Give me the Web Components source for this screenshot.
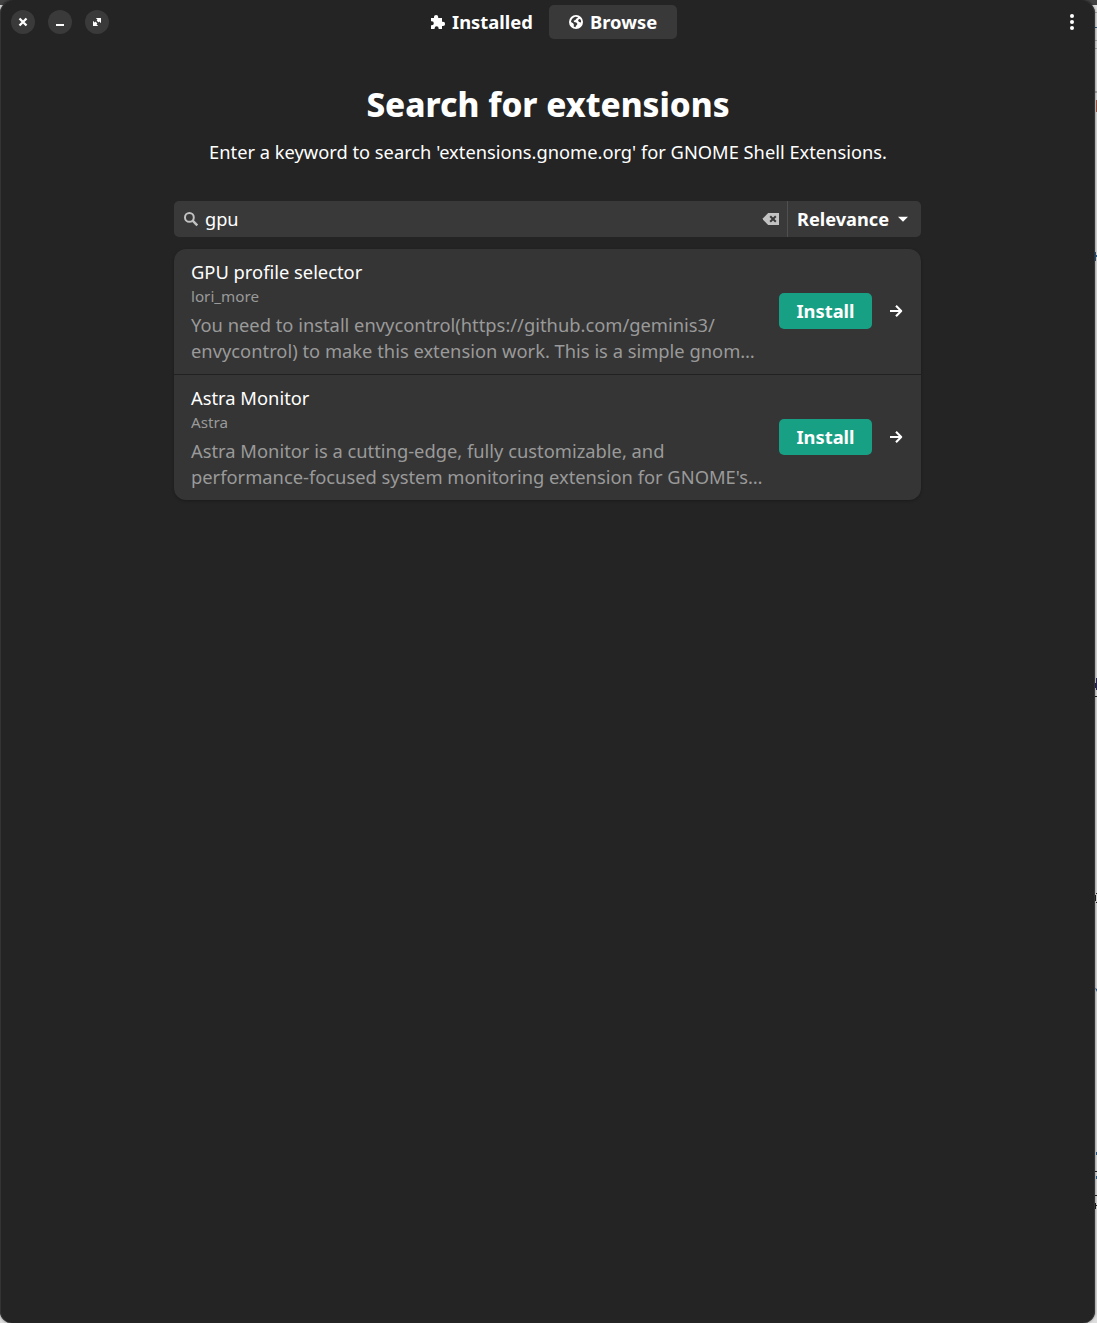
<!DOCTYPE html>
<html lang="en">
<head>
<meta charset="utf-8">
<title>Extension Manager</title>
<style>
html,body{margin:0;height:100%;overflow:hidden}
body{font-family:"Noto Sans",sans-serif;font-size:18.33px;line-height:26px;color:#fff}
</style>
</head>
<body>
<desk-backdrop>
  <app-window>
    <header-bar slot="header"></header-bar>
    <search-page>
      <search-bar slot="search" value="gpu" sort="Relevance"></search-bar>
      <extension-row><span slot="name">GPU profile selector</span><span slot="author">lori_more</span><span slot="description">You need to install envycontrol(https://github.com/geminis3/<br>envycontrol) to make this extension work. This is a simple gnom…</span></extension-row>
      <extension-row><span slot="name">Astra Monitor</span><span slot="author">Astra</span><span slot="description">Astra Monitor is a cutting-edge, fully customizable, and<br>performance-focused system monitoring extension for GNOME's…</span></extension-row>
    </search-page>
  </app-window>
</desk-backdrop>
<script>
function define(name, html, setup) {
  const template = document.createElement('template');
  template.innerHTML = html;
  customElements.define(name, class extends HTMLElement {
    constructor() {
      super();
      this.attachShadow({ mode: 'open' }).append(template.content.cloneNode(true));
    }
    connectedCallback() { if (setup) setup(this, this.shadowRoot); }
  });
}

const icons = {
  close: '<path d="M4.5 4.5l7 7M11.5 4.5l-7 7" fill="none" stroke="currentColor" stroke-width="2.3"/>',
  minimize: '<path d="M4 10h8v2H4z"/>',
  restore: '<path d="M6.8 4H12v5.2l-1.6-1.6-1.3 1.1-1.8-1.8 1.1-1.3zM4 6.8l1.6 1.6 1.3-1.1 1.8 1.8-1.1 1.3L9.2 12H4z"/><path d="M5.8 5.8l4.4 4.4" stroke="#3a3a3a" stroke-width="1.5"/>',
  puzzle: '<path d="M6.1 1a2.1 2.1 0 0 1 2.1 2.1V4H12v3.8h1a2.1 2.1 0 0 1 0 4.2h-1v3H8.6v-.8a2 2 0 0 0-4 0v.8H1v-3.7h.8a2 2 0 0 0 0-4H1V4h3v-.9A2.1 2.1 0 0 1 6.1 1z"/>',
  globe: '<path fill-rule="evenodd" d="M8 1a7 7 0 1 1 0 14A7 7 0 0 1 8 1zM7.2 2.7L4.9 4 3.4 6.1 3 8l2.1 1.2.8 1.5-.2 1.7 1.6.9 1-1.7 1.2-1.7-1.2-1.4-2.2-.6-.5-1.1 1.8-.7 1.1-1.5 1.5-.9-.6-.8zM11 5l-1 1.7 1.1 1.2 1.9.5.1-1.6-.8-1.5z"/>',
  more: '<circle cx="8" cy="2" r="2"/><circle cx="8" cy="8" r="2"/><circle cx="8" cy="14" r="2"/>',
  search: '<circle cx="6.4" cy="6.4" r="4.4" fill="none" stroke="currentColor" stroke-width="2"/><path d="M9.6 9.6l4.7 4.7" stroke="currentColor" stroke-width="2.4"/>',
  clear: '<path fill-rule="evenodd" d="M5.2 2H16v12H5.2L0 8.7V7.3z"/><path d="M7.2 5.2l5.6 5.6M12.8 5.2l-5.6 5.6" stroke="#393939" stroke-width="2"/>',
  down: '<path d="M3 5.8h10l-5 5z"/>',
  arrow: '<path d="M2 8h11M8 2.7L13.2 8 8 13.3" fill="none" stroke="currentColor" stroke-width="2.1" stroke-linejoin="round"/>'
};
define('symbolic-icon', `<style>
:host{display:block;width:16px;height:16px;flex:none}svg{display:block;width:100%;height:100%;fill:currentColor;overflow:visible}
</style><svg viewBox="0 0 16 16"></svg>`, (el, root) => {
  root.querySelector('svg').innerHTML = icons[el.getAttribute('name')];
});

define('desk-backdrop', `<style>
:host{display:block;position:relative;height:1323px;overflow:hidden;background:linear-gradient(#424242 5px,#dedede 5px,#dedede 100%)}
svg{position:absolute;right:0;top:0}
</style><svg width="2" height="1323" viewBox="0 0 2 1323">
<path fill="#aaa" d="M0 12h2v1H0zM0 40h2v1H0zM0 48h2v1H0zM0 91h2v2H0z"/>
<path fill="#2b5d87" d="M0 27h2v1H0zM0 252h1v9H0zM1 255h1v2H1zM0 988l2 4v-3zM1 1152h1v3H1zM1 1176h1v3H1z"/>
<path fill="#a35c49" d="M1 100h1v12H1z"/><path fill="#292957" d="M0 683h1v5H0zM1 678h1v12H1z"/>
<path fill="#222" d="M0 696h2v1H0zM0 895h1v6H0zM1 893h1v1H1zM1 902h1v1H1zM0 1171h2v1H0zM0 1195h2v1H0zM0 1203h1v6H0zM1 1205h1v1H1z"/>
</svg><slot></slot>`);

define('app-window', `<style>
:host{display:flex;flex-direction:column;position:relative;box-sizing:border-box;width:1095px;height:1323px;background:#242424;border-radius:14px 14px 12px 12px;overflow:hidden;box-shadow:inset 1px 0 #343434,inset -1px 0 #343434,0 0 3px #0008}
</style><slot name="header"></slot><slot></slot>`);

define('header-bar', `<style>
:host{display:grid;grid-template-columns:1fr auto 1fr;align-items:center;height:44px;padding:0 11px;font-weight:700;font-size:18.4px}
.controls{display:flex;gap:13px}.controls i{display:grid;place-items:center;width:24px;height:24px;border-radius:50%;background:#3a3a3a}
.tabs{display:flex;margin:0 8px 0 0}
.tab{display:flex;align-items:center;gap:6px;height:34px;width:139px;box-sizing:border-box;padding:0 0 0 20px;border-radius:5px}
.tab.active{background:#393939;width:128px;padding:0 0 0 19px}
.menu{justify-self:end;margin-right:4px}
</style>
<div class="controls"><i><symbolic-icon name="close"></symbolic-icon></i><i><symbolic-icon name="minimize"></symbolic-icon></i><i><symbolic-icon name="restore"></symbolic-icon></i></div>
<div class="tabs"><div class="tab"><symbolic-icon name="puzzle"></symbolic-icon><span>Installed</span></div><div class="tab active"><symbolic-icon name="globe"></symbolic-icon><span>Browse</span></div></div>
<symbolic-icon class="menu" name="more"></symbolic-icon>`);

define('search-page', `<style>
:host{display:block;width:747px;margin:0 0 0 174px}
h1{font-size:33.24px;line-height:46px;font-weight:800;text-align:center;margin:37px 0 0;padding:0 0 1px 1px}
p{font-size:18.3px;text-align:center;margin:11px 0 36px;padding-left:1px;line-height:26px;white-space:nowrap}
.list{margin-top:12px;border-radius:12px;background:#353535;overflow:hidden;box-shadow:0 1px 3px #0004}
</style><h1>Search for extensions</h1><p>Enter a keyword to search 'extensions.gnome.org' for GNOME Shell Extensions.</p>
<slot name="search"></slot><div class="list"><slot></slot></div>`);

define('search-bar', `<style>
:host{display:flex;height:36px;border-radius:5px;background:#393939;overflow:hidden}
.entry{display:flex;align-items:center;flex:1;padding:0 8px 0 9px;gap:6px}.entry span{flex:1;font-size:18.2px}
symbolic-icon.dim{color:#c2c2c2}
.sort{display:flex;align-items:center;justify-content:space-between;box-sizing:border-box;width:134px;padding:0 10px 0 9px;border-left:1px solid #505050;font-weight:700;font-size:18.2px}
</style><div class="entry"><symbolic-icon class="dim" name="search"></symbolic-icon><span id="value"></span><symbolic-icon class="dim" name="clear"></symbolic-icon></div>
<div class="sort"><span id="sort"></span><symbolic-icon name="down"></symbolic-icon></div>`, (el, root) => {
  root.getElementById('value').textContent = el.getAttribute('value');
  root.getElementById('sort').textContent = el.getAttribute('sort');
});

define('extension-row', `<style>
:host{display:flex;align-items:center;box-sizing:border-box;height:125px;padding:0 17px 1px}
:host(:not(:first-of-type)){border-top:1px solid #212121;height:126px}
.text{flex:1;min-width:0;white-space:nowrap}
.name{height:26px}.author{font-size:15.2px;line-height:22px;height:22px;color:#9a9a9a}.desc{margin-top:5px;line-height:26px;color:#9a9a9a}
.install{display:grid;place-items:center;width:93px;height:36px;border-radius:5px;background:#18a085;font-weight:700;margin-right:16px}
</style><div class="text"><div class="name"><slot name="name"></slot></div><div class="author"><slot name="author"></slot></div><div class="desc"><slot name="description"></slot></div></div>
<div class="install">Install</div><symbolic-icon name="arrow"></symbolic-icon>`);
</script>
</body>
</html>
